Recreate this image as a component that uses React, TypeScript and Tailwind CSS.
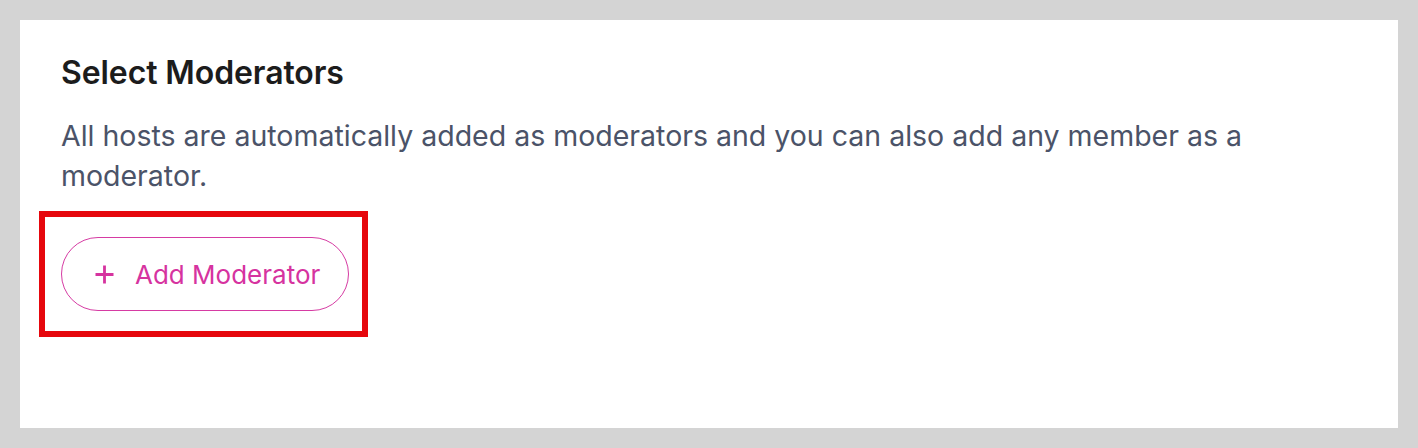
import React from "react";

export default function App() {
  return (
    <div className="min-h-[448px] w-full bg-[#d4d4d4] p-5 font-['Inter','Noto_Sans',sans-serif]">
      <div className="h-[408px] bg-white pl-[41px] pr-[41px] pt-[33px]">
        {/* Heading */}
        <h2 className="text-[32px] font-semibold leading-[40px] tracking-[-0.1px] text-[#1c1c1c]">
          Select Moderators
        </h2>

        {/* Description */}
        <p className="mt-[23px] text-[28.5px] leading-[40px] text-[#4b5368]">
          All hosts are automatically added as moderators and you can also add any member as a moderator.
        </p>

        {/* Highlighted button */}
        <div className="-ml-[22px] mt-[15px] inline-block border-[6px] border-[#e6070d] pb-[20px] pl-[16px] pr-[13px] pt-[20px]">
          <button className="flex h-[74px] w-[288px] items-center gap-[21px] rounded-full border-[1.5px] border-[#d63ba3] pl-[33px] text-[26px] text-[#d6339f]">
            <svg className="h-[19px] w-[19px]" viewBox="0 0 19 19" fill="none" stroke="currentColor" strokeWidth="2.8">
              <path d="M9.5 0.5v18M0.5 9.5h18" />
            </svg>
            <span>Add Moderator</span>
          </button>
        </div>
      </div>
    </div>
  );
}
